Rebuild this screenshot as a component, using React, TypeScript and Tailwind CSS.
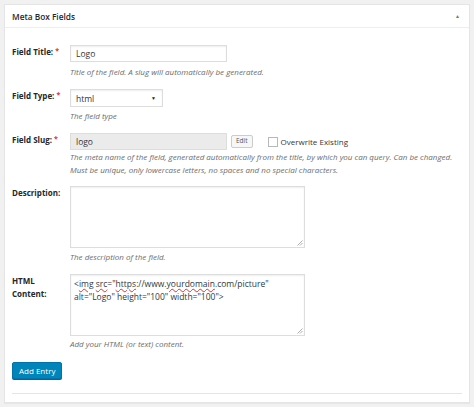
import React from "react";

const font = { fontFamily: "'Open Sans', 'Noto Sans', sans-serif" };

function Label({ children, required }: { children: React.ReactNode; required?: boolean }) {
  return (
    <div className="w-[58px] shrink-0 text-[8px] font-bold leading-[13px] text-[#23282d]">
      {children}
      {required && <span className="ml-[2px] align-top text-[7px] leading-[11px] text-[#dc3232]">*</span>}
    </div>
  );
}

function Hint({ children }: { children: React.ReactNode }) {
  return <p className="text-[8px] italic leading-[13px] text-[#6c6c6c]">{children}</p>;
}

function ResizeGrip() {
  return (
    <svg className="absolute bottom-[1px] right-[1px]" width="7" height="7" viewBox="0 0 7 7">
      <path d="M6.5 1.5 L1.5 6.5 M6.5 4 L4 6.5" stroke="#9a9a9a" strokeWidth="0.8" fill="none" />
    </svg>
  );
}

function Squiggle({ children }: { children: React.ReactNode }) {
  return <span className="underline decoration-wavy decoration-[#e03030] decoration-[0.6px] underline-offset-[1px]">{children}</span>;
}

export default function App() {
  return (
    <div className="min-h-screen bg-[#f1f1f1] pl-[4px] pt-[4px] text-[8px] leading-[13px]" style={font}>
      <div className="w-[466px] border border-[#e5e5e5] bg-white shadow-[0_1px_1px_rgba(0,0,0,0.04)]">
        <div className="flex h-[23px] items-center justify-between border-b border-[#eee] pl-[7px] pr-[9px]">
          <h2 className="text-[8.3px] font-semibold text-[#23282d]">Meta Box Fields</h2>
          <span className="text-[5px] leading-none text-[#72777c]">▲</span>
        </div>

        <div className="px-[7px] pb-[8px]">
          {/* Field Title */}
          <div className="mt-[17px] flex">
            <Label required>Field Title:</Label>
            <div>
              <input
                readOnly
                defaultValue="Logo"
                className="block h-[17px] w-[157px] border border-[#ddd] px-[5px] text-[8.5px] text-[#32373c] shadow-[inset_0_1px_2px_rgba(0,0,0,0.07)] outline-none"
              />
              <div className="mt-[3px]">
                <Hint>Title of the field. A slug will automatically be generated.</Hint>
              </div>
            </div>
          </div>

          {/* Field Type */}
          <div className="mt-[11px] flex">
            <Label required>Field Type:</Label>
            <div>
              <div className="relative h-[18px] w-[93px] border border-[#ddd] shadow-[inset_0_1px_2px_rgba(0,0,0,0.07)]">
                <span className="absolute left-[5px] top-[2px] text-[8.5px] leading-[13px] text-[#32373c]">html</span>
                <span className="absolute right-[6px] top-[6px] text-[5px] leading-none text-[#222]">▼</span>
              </div>
              <div className="mt-[2px]">
                <Hint>The field type</Hint>
              </div>
            </div>
          </div>

          {/* Field Slug */}
          <div className="mt-[11px] flex">
            <Label required>Field Slug:</Label>
            <div>
              <div className="flex items-center">
                <input
                  readOnly
                  defaultValue="logo"
                  className="block h-[17px] w-[157px] border border-[#ddd] bg-[#ebebeb] px-[5px] text-[8.5px] text-[#32373c] outline-none"
                />
                <button className="ml-[4px] flex h-[13px] items-center rounded-[2px] border border-[#ccc] bg-[#f7f7f7] px-[4px] text-[6.5px] leading-none text-[#555]">
                  Edit
                </button>
                <span className="ml-[15px] h-[10px] w-[10px] border border-[#b4b9be] bg-white" />
                <span className="ml-[3px] text-[8px] leading-[13px] text-[#32373c]">Overwrite Existing</span>
              </div>
              <Hint>
                The meta name of the field, generated automatically from the title, by which you can query. Can be changed.
                <br />
                Must be unique, only lowercase letters, no spaces and no special characters.
              </Hint>
            </div>
          </div>

          {/* Description */}
          <div className="mt-[10px] flex">
            <Label>Description:</Label>
            <div>
              <div className="relative h-[62px] w-[235px] border border-[#ddd] shadow-[inset_0_1px_2px_rgba(0,0,0,0.07)]">
                <ResizeGrip />
              </div>
              <div className="mt-[2px]">
                <Hint>The description of the field.</Hint>
              </div>
            </div>
          </div>

          {/* HTML Content */}
          <div className="mt-[11px] flex">
            <Label>
              HTML
              <br />
              Content:
            </Label>
            <div>
              <div className="relative h-[62px] w-[235px] border border-[#ddd] px-[3px] pt-[2px] text-[8.5px] leading-[13px] text-[#32373c] shadow-[inset_0_1px_2px_rgba(0,0,0,0.07)]">
                &lt;<Squiggle>img</Squiggle> <Squiggle>src</Squiggle>="<Squiggle>https</Squiggle>://www.<Squiggle>yourdomain</Squiggle>.com/picture"
                <br />
                alt="Logo" height="100" width="100"&gt;
                <ResizeGrip />
              </div>
              <div className="mt-[1px]">
                <Hint>Add your HTML (or text) content.</Hint>
              </div>
            </div>
          </div>

          <button className="mt-[12px] flex h-[17px] items-center rounded-[2px] border border-[#0073aa] bg-[#0085ba] px-[6px] text-[8px] leading-none text-white shadow-[0_1px_0_#006799]">
            Add Entry
          </button>

          <div className="mt-[14px] border-t border-[#e5e5e5]" />
        </div>
      </div>
    </div>
  );
}
